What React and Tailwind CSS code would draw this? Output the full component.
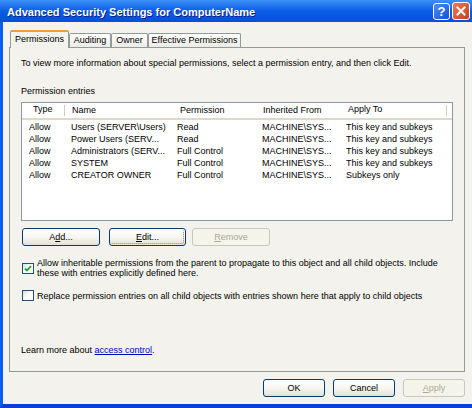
import React from 'react';

const font = { fontFamily: '"Liberation Sans", Arial, sans-serif' };

const rows = [
  ['Allow', 'Users (SERVER\\Users)', 'Read', 'MACHINE\\SYS...', 'This key and subkeys'],
  ['Allow', 'Power Users (SERV...', 'Read', 'MACHINE\\SYS...', 'This key and subkeys'],
  ['Allow', 'Administrators (SERV...', 'Full Control', 'MACHINE\\SYS...', 'This key and subkeys'],
  ['Allow', 'SYSTEM', 'Full Control', 'MACHINE\\SYS...', 'This key and subkeys'],
  ['Allow', 'CREATOR OWNER', 'Full Control', 'MACHINE\\SYS...', 'Subkeys only'],
];

const XpButton = ({ children, width, disabled, focused }) => (
  <button
    className={`relative h-[18px] ${width} rounded-[3px] border text-[9px] leading-none flex items-center justify-center ${
      disabled
        ? 'border-[#c9c7ba] bg-[#f5f4ea] text-[#aca899]'
        : 'border-[#003c74] bg-gradient-to-b from-white via-[#f7f6f1] to-[#e3e1d6] text-black'
    }`}
  >
    {focused && (
      <span className="absolute inset-[1px] rounded-[2px] border-r border-b border-dotted border-[#e0683c]" />
    )}
    {children}
  </button>
);

const Checkbox = ({ checked }) => (
  <div className="w-[12px] h-[11px] shrink-0 border border-[#1c5180] bg-gradient-to-br from-[#dcdcd7] via-white to-white flex items-center justify-center">
    {checked && (
      <svg width="8" height="7" viewBox="0 0 8 7">
        <polyline points="1,3.5 3,5.5 7,1" fill="none" stroke="#21a121" strokeWidth="1.8" />
      </svg>
    )}
  </div>
);

export default function App() {
  return (
    <div className="w-[472px] h-[408px] flex flex-col bg-[#f3f2ec] overflow-hidden" style={font}>
      {/* Title bar */}
      <div className="h-[22px] shrink-0 flex items-center pl-[7px] pr-[2px] bg-gradient-to-b from-[#3d8ff7] via-[#0a5ce6] to-[#0550d8]">
        <span className="flex-1 pt-[3px] text-white font-bold text-[11px] leading-none [text-shadow:1px_1px_0_#0a1f8f]">
          Advanced Security Settings for ComputerName
        </span>
        <div className="flex gap-[2px] items-center">
          <div className="w-[17px] h-[17px] rounded-[3px] border border-white bg-gradient-to-br from-[#4d8df8] to-[#1450d8] flex items-center justify-center text-white font-bold text-[13px] leading-none">
            ?
          </div>
          <div className="w-[18px] h-[18px] rounded-[3px] border border-white bg-gradient-to-br from-[#e87a5a] to-[#c8401c] flex items-center justify-center">
            <svg width="10" height="10" viewBox="0 0 10 10">
              <path d="M1.5 1.5 L8.5 8.5 M8.5 1.5 L1.5 8.5" stroke="white" strokeWidth="2" strokeLinecap="square" />
            </svg>
          </div>
        </div>
      </div>

      {/* Body */}
      <div className="flex-1 flex flex-col border-l-[3px] border-b-[4px] border-l-[#0b5cf0] border-b-[#0a3fd4] pl-[6px] pr-[7px] pt-[8px]">
        {/* Tabs */}
        <div className="h-[17px] flex items-end pl-[1px] text-[9px] leading-none">
          <div className="relative z-10 w-[59px] h-[18px] -mb-[1px] bg-[#f3f2ec] border-x border-[#919b9c] border-t-[2px] border-t-[#e8a23a] rounded-t-[2px] flex items-center justify-center pb-[2px]">
            Permissions
          </div>
          <div className="w-[42px] h-[14px] border border-b-0 border-[#919b9c] rounded-t-[2px] bg-gradient-to-b from-white to-[#ecebe5] flex items-center justify-center">
            Auditing
          </div>
          <div className="w-[37px] h-[14px] border border-b-0 border-[#919b9c] rounded-t-[2px] bg-gradient-to-b from-white to-[#ecebe5] flex items-center justify-center">
            Owner
          </div>
          <div className="w-[93px] h-[14px] border border-b-0 border-[#919b9c] rounded-t-[2px] bg-gradient-to-b from-white to-[#ecebe5] flex items-center justify-center">
            Effective Permissions
          </div>
        </div>

        {/* Panel */}
        <div className="h-[325px] shrink-0 border border-[#919b9c] border-t-[#919b9c] pl-[11px] pr-[11px] pt-[10px] text-[9px] text-black flex flex-col">
          <div className="leading-[11px] h-[11px]">
            To view more information about special permissions, select a permission entry, and then click Edit.
          </div>
          <div className="leading-[11px] h-[11px] mt-[17px]">Permission entries</div>

          {/* List view */}
          <div className="mt-[5px] h-[119px] border border-[#8b98a8] bg-white flex flex-col">
            <div className="h-[17px] shrink-0 flex items-center border-b-[2px] border-[#dcd9c9] leading-none">
              <div className="w-[43px] pl-[11px] h-[11px] border-r border-[#d0cdbf]">Type</div>
              <div className="w-[107px] pl-[7px]">Name</div>
              <div className="w-[85px] pl-[8px]">Permission</div>
              <div className="w-[84px] pl-[6px]">Inherited From</div>
              <div className="w-[106px] pl-[7px] h-[11px] border-r border-[#d0cdbf]">Apply To</div>
            </div>
            <div className="pt-[1px]">
              {rows.map((r) => (
                <div key={r[1]} className="h-[12px] flex items-center leading-none whitespace-nowrap">
                  <div className="w-[43px] pl-[7px]">{r[0]}</div>
                  <div className="w-[107px] pl-[6px]">{r[1]}</div>
                  <div className="w-[85px] pl-[5px]">{r[2]}</div>
                  <div className="w-[84px] pl-[5px]">{r[3]}</div>
                  <div className="pl-[5px]">{r[4]}</div>
                </div>
              ))}
            </div>
          </div>

          {/* Add / Edit / Remove */}
          <div className="mt-[7px] flex pl-[1px]">
            <XpButton width="w-[78px]">
              A<span className="underline">d</span>d...
            </XpButton>
            <div className="ml-[9px]">
              <XpButton width="w-[77px]" focused>
                <span className="underline">E</span>dit...
              </XpButton>
            </div>
            <div className="ml-[6px]">
              <XpButton width="w-[78px]" disabled>
                <span className="underline">R</span>emove
              </XpButton>
            </div>
          </div>

          {/* Checkboxes */}
          <div className="mt-[12px] flex items-center pl-[1px] gap-[3px]">
            <Checkbox checked />
            <div className="leading-[10px]">
              Allow inheritable permissions from the parent to propagate to this object and all child objects. Include
              <br />
              these with entries explicitly defined here.
            </div>
          </div>
          <div className="mt-[12px] flex items-center pl-[1px] gap-[3px]">
            <Checkbox />
            <div className="leading-[10px]">
              Replace permission entries on all child objects with entries shown here that apply to child objects
            </div>
          </div>

          <div className="mt-[44px] leading-[11px]">
            Learn more about <span className="text-[#0000c8] underline">access control</span>.
          </div>
        </div>

        {/* Bottom buttons */}
        <div className="mt-[7px] flex justify-end gap-[8px]">
          <XpButton width="w-[62px]">OK</XpButton>
          <XpButton width="w-[62px]">Cancel</XpButton>
          <XpButton width="w-[62px]" disabled>
            <span className="underline">A</span>pply
          </XpButton>
        </div>
      </div>
    </div>
  );
}
